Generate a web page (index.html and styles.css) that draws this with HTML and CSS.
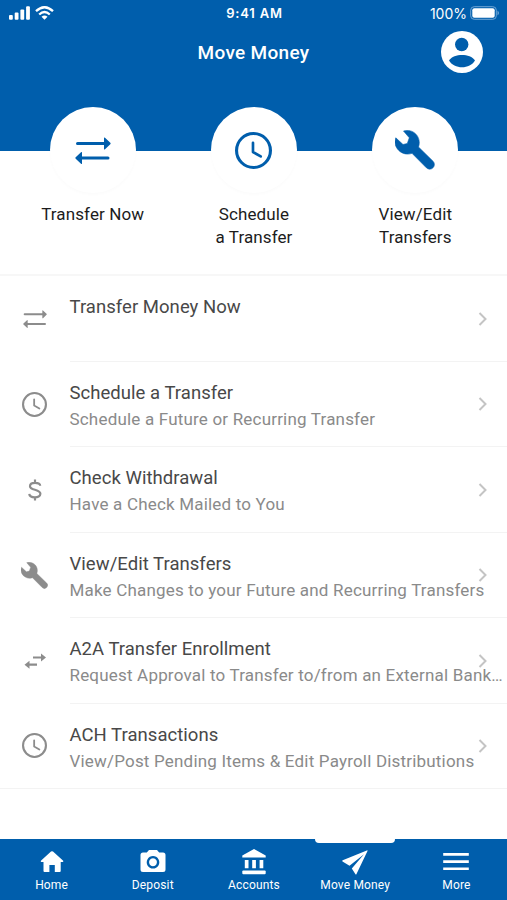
FILE: index.html
```
<!DOCTYPE html>
<html lang="en">
<head>
  <meta charset="UTF-8">
  <title>Move Money</title>
  <link rel="stylesheet" href="styles.css">
</head>
<body>
  <svg class="sprite">
    <symbol id="transfer" viewBox="0 0 36 27">
      <path d="M2.5 6.500H30M33 21H6" fill="none" stroke="currentColor" stroke-width="3" stroke-linecap="round"/>
      <path d="M29 .8q.4-.6 1 0l5.300 5q.7.700 0 1.400l-5.300 5q-.6.600-1 0zM7 15.300q-.4-.6-1 0l-5.300 5q-.7.700 0 1.400l5.300 5q.6.600 1 0z" fill="currentColor"/>
    </symbol>
    <symbol id="clock" viewBox="0 0 36 36">
      <g fill="none" stroke="currentColor" stroke-linecap="round" stroke-linejoin="round">
        <circle cx="18" cy="18" r="16.500" stroke-width="3"/>
        <path d="M17.500 10.500V19.500L25 23.800" stroke-width="2.600"/>
      </g>
    </symbol>
    <symbol id="wrench" viewBox="0 0 40 40">
      <path d="M8.500 1C18-2 27 7 23.500 17L38 31.200a4.600 4.600 0 0 1-6.600 6.600L17 23.300C7 27-3 17 .800 7.800L8 14.500L12.300 13.500L14.300 7.800Z" fill="currentColor" stroke="currentColor" stroke-width=".6" stroke-linejoin="round"/>
    </symbol>
    <symbol id="dollar" viewBox="0 0 14 22">
      <path d="M12.200 6.800C12 3 2 2.600 2 7.200c0 4.500 10.400 2.500 10.400 7.600 0 4.800-10.900 4.600-11.100.100M7 .5v3.300M7 18v3.500" fill="none" stroke="currentColor" stroke-width="2.200"/>
    </symbol>
    <symbol id="swap" viewBox="0 0 22 16">
      <path d="M9 4.500h9M13 11.700H4" fill="none" stroke="currentColor" stroke-width="2.200"/>
      <path d="M17 .5l5 4-5 4zM5.500 7.700l-5 4 5 4z" fill="currentColor"/>
    </symbol>
    <symbol id="chevron" viewBox="0 0 10 14">
      <path d="M1.500 1L7.500 7L1.500 13" fill="none" stroke="currentColor" stroke-width="2"/>
    </symbol>
  </svg>

  <header class="header">
    <div class="status">
      <div class="status-left">
        <svg width="21" height="14" viewBox="0 0 21 14" fill="#fff">
          <rect x="0" y="9" width="3.800" height="4.700" rx="1"/>
          <rect x="5.700" y="6.500" width="3.800" height="7.200" rx="1"/>
          <rect x="11.400" y="3.500" width="3.800" height="10.200" rx="1"/>
          <rect x="17.100" y=".2" width="3.800" height="13.500" rx="1"/>
        </svg>
        <svg width="19" height="14" viewBox="0 0 19 14" fill="none" stroke="#fff" stroke-width="2.300">
          <path d="M1 5.200Q9.500-2.800 18 5.200M4.200 8.500Q9.500 3.500 14.800 8.500"/>
          <path d="M6.500 10.700Q9.500 8.200 12.500 10.700L9.500 13.800Z" fill="#fff" stroke="none"/>
        </svg>
      </div>
      <div class="time">9:41 AM</div>
      <div class="status-right">
        <span>100%</span>
        <svg width="30" height="14" viewBox="0 0 30 14">
          <rect x=".7" y=".7" width="25.600" height="12.600" rx="3.500" fill="none" stroke="#6fa5d6" stroke-width="1"/>
          <rect x="2.300" y="2.300" width="22.400" height="9.400" rx="2" fill="#fff"/>
          <path d="M27.500 4.500q3 2.500 0 5z" fill="#6fa5d6"/>
        </svg>
      </div>
    </div>
    <div class="title-bar">
      <h1>Move Money</h1>
      <svg class="avatar" viewBox="0 0 42 42">
        <circle cx="21" cy="21" r="21" fill="#fff"/>
        <circle cx="20.700" cy="13.500" r="6.700" fill="#005eac"/>
        <path d="M8 29.500C13 22.300 29 22.300 34 29.500C29 38.500 13 38.500 8 29.500Z" fill="#005eac"/>
      </svg>
    </div>
  </header>

  <section class="shortcuts">
    <div class="shortcut">
      <div class="circle"><svg class="big-transfer"><use href="#transfer"/></svg></div>
      <p>Transfer Now</p>
    </div>
    <div class="shortcut">
      <div class="circle"><svg class="big-clock"><use href="#clock"/></svg></div>
      <p>Schedule<br>a Transfer</p>
    </div>
    <div class="shortcut">
      <div class="circle"><svg class="big-wrench"><use href="#wrench"/></svg></div>
      <p>View/Edit<br>Transfers</p>
    </div>
  </section>

  <main class="list">
    <div class="row">
      <div class="row-icon"><svg width="24" height="18"><use href="#transfer"/></svg></div>
      <div class="row-text"><h2>Transfer Money Now</h2></div>
      <svg class="chevron"><use href="#chevron"/></svg>
    </div>
    <div class="row">
      <div class="row-icon"><svg width="25" height="25"><use href="#clock"/></svg></div>
      <div class="row-text"><h2>Schedule a Transfer</h2><p>Schedule a Future or Recurring Transfer</p></div>
      <svg class="chevron"><use href="#chevron"/></svg>
    </div>
    <div class="row">
      <div class="row-icon"><svg width="14" height="22"><use href="#dollar"/></svg></div>
      <div class="row-text"><h2>Check Withdrawal</h2><p>Have a Check Mailed to You</p></div>
      <svg class="chevron"><use href="#chevron"/></svg>
    </div>
    <div class="row">
      <div class="row-icon"><svg width="27" height="27"><use href="#wrench"/></svg></div>
      <div class="row-text"><h2>View/Edit Transfers</h2><p>Make Changes to your Future and Recurring Transfers</p></div>
      <svg class="chevron"><use href="#chevron"/></svg>
    </div>
    <div class="row">
      <div class="row-icon"><svg width="22" height="16"><use href="#swap"/></svg></div>
      <div class="row-text"><h2>A2A Transfer Enrollment</h2><p>Request Approval to Transfer to/from an External Bank…</p></div>
      <svg class="chevron"><use href="#chevron"/></svg>
    </div>
    <div class="row">
      <div class="row-icon"><svg width="25" height="25"><use href="#clock"/></svg></div>
      <div class="row-text"><h2>ACH Transactions</h2><p>View/Post Pending Items &amp; Edit Payroll Distributions</p></div>
      <svg class="chevron"><use href="#chevron"/></svg>
    </div>
  </main>

  <nav class="tabs">
    <a class="tab">
      <svg viewBox="0 0 28 28"><path d="M14 3.200q.6 0 1 .4L25.200 12.800q.6.900-.5 1.200H22.700v9q0 1-1 1H16.800v-7h-5.400v7H6.500q-1 0-1-1v-9H3.300q-1-.3-.4-1.200L13 3.600q.4-.4 1-.4z"/></svg>
      <span>Home</span>
    </a>
    <a class="tab">
      <svg viewBox="0 0 28 28"><path fill-rule="evenodd" d="M10 2h8l2.200 2.500H24q2.500 0 2.500 2.500v14.500q0 2.500-2.500 2.500H4q-2.500 0-2.500-2.500V7Q1.500 4.500 4 4.500h3.800zM14 8a6.300 6.300 0 1 0 .01 0zM14 10.300a4 4 0 1 1-.01 0z"/></svg>
      <span>Deposit</span>
    </a>
    <a class="tab">
      <svg viewBox="0 0 28 28"><path d="M14 1L25.700 7.500V9.500H2.300V7.500zM4.800 12h3.700v8.300H4.800zM12.200 12h3.700v8.300h-3.700zM19.600 12h3.700v8.300h-3.700z"/><rect x="2.300" y="22.500" width="23.400" height="3.700" rx="1"/></svg>
      <span>Accounts</span>
    </a>
    <a class="tab active">
      <svg viewBox="0 0 28 28"><path d="M26.500 3L15.500 26Q15 27 14.300 26L10.800 20.500L23 6.300L8.500 17.800L1.500 13.500Q.8 12.800 1.700 12.300L25.800 2.400Q26.800 2.200 26.500 3z"/></svg>
      <span>Move Money</span>
    </a>
    <a class="tab">
      <svg viewBox="0 0 28 28"><path d="M1.200 5h25.600v2.700H1.200zM1.200 12.200h25.600v2.700H1.200zM1.200 19.400h25.600v2.700H1.200z"/></svg>
      <span>More</span>
    </a>
  </nav>
</body>
</html>
```

FILE: styles.css
```
* { box-sizing: border-box; }
body { margin: 0; height: 900px; display: flex; flex-direction: column; overflow: hidden; background: #fff; font-family: Roboto, sans-serif; }
h1, h2, p { margin: 0; font-weight: 400; }
.sprite { display: none; }

.header { height: 151px; flex: none; background: #005eac; color: #fff; }
.status { height: 26px; padding: 0 7px 0 9px; display: grid; grid-template-columns: 1fr auto 1fr; align-items: center; font-family: Inter, sans-serif; }
.status-left { display: flex; gap: 5px; }
.time { font-size: 13px; font-weight: 600; letter-spacing: 0.8px; }
.status-right { display: flex; justify-content: flex-end; align-items: center; gap: 3px; font-size: 14px; }
.title-bar { height: 52px; padding: 0 24px; display: grid; grid-template-columns: 1fr auto 1fr; align-items: center; }
.title-bar h1 { grid-column: 2; font-size: 19px; font-weight: 500; letter-spacing: 0.3px; }
.avatar { width: 42px; height: 42px; justify-self: end; }

.shortcuts { height: 125px; flex: none; padding: 0 11px 0 12px; display: grid; grid-template-columns: repeat(3, 1fr); border-bottom: 2px solid #f7f7f7; }
.shortcut { display: flex; flex-direction: column; align-items: center; margin-top: -44px; }
.circle { width: 86px; height: 86px; border-radius: 50%; background: #fff; color: #005eac; display: flex; align-items: center; justify-content: center; box-shadow: 0 2px 3px rgba(0,0,0,0.015); }
.shortcut p { margin-top: 10px; font-size: 17px; line-height: 22.500px; letter-spacing: 0.1px; text-align: center; color: #1c1c1c; }
.big-transfer { width: 36px; height: 27px; }
.big-clock { width: 37px; height: 37px; }
.big-wrench { width: 40px; height: 40px; }

.list { flex: 1; }
.row { height: 85.500px; display: grid; grid-template-columns: 69.500px 1fr 34px; align-items: center; }
.row:last-child { border-bottom: 1px solid #f3f3f3; }
.row-icon { display: flex; justify-content: center; color: #8c8c8c; }
.row-text { height: 100%; padding-top: 18px; border-bottom: 1px solid #f3f3f3; grid-column: 2 / 4; grid-row: 1; white-space: nowrap; }
.row:last-child .row-text { border: 0; }
.row-text h2 { font-size: 18.500px; line-height: 26px; letter-spacing: 0.04px; color: #484848; }
.row-text p { font-size: 17px; line-height: 26px; letter-spacing: 0.19px; color: #8a8a8a; }
.chevron { grid-column: 3; grid-row: 1; width: 10px; height: 14px; margin-left: 5px; color: #c4c4c4; }

.tabs { height: 61.500px; flex: none; padding-left: 1px; display: grid; grid-template-columns: repeat(5, 1fr); background: #005eac; color: #fff; }
.tab { position: relative; display: flex; flex-direction: column; align-items: center; padding-top: 9px; }
.tab svg { width: 28px; height: 28px; fill: #fff; }
.tab span { font-size: 12px; line-height: 16px; letter-spacing: 0.15px; margin-top: 1px; white-space: nowrap; }
.active::before { content: ""; position: absolute; top: 0; width: 80px; height: 4px; background: #fff; border-radius: 0 0 4px 4px; }
```
